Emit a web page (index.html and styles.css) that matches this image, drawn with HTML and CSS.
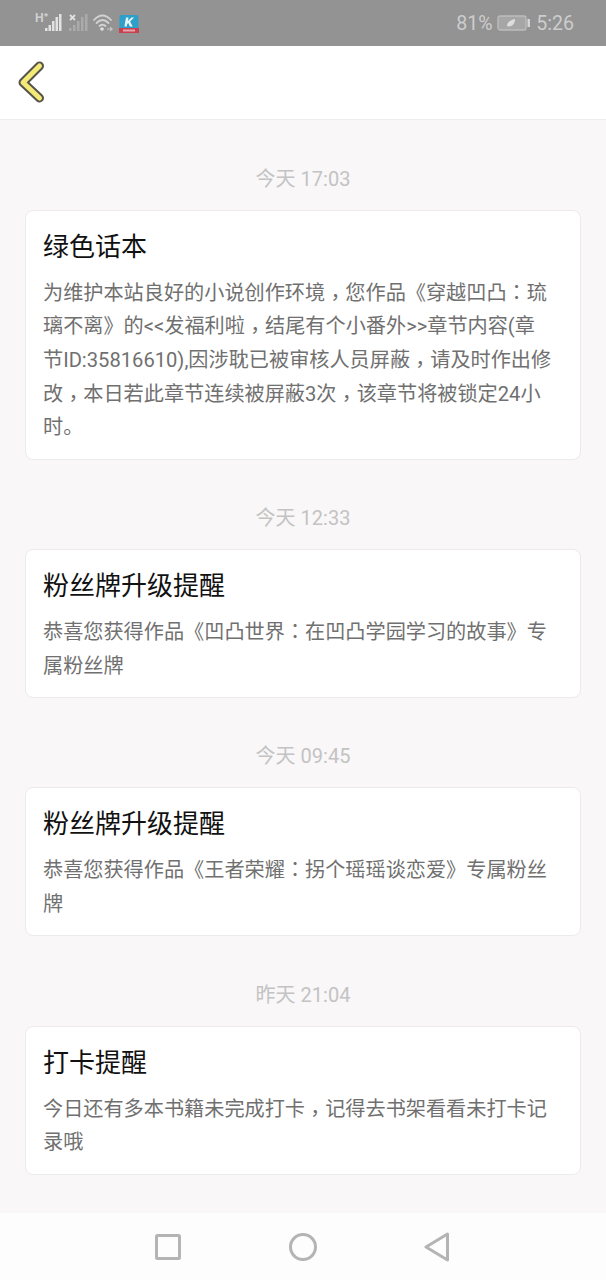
FILE: index.html
```html
<!DOCTYPE html>
<html lang="zh-CN">
<head>
<meta charset="utf-8">
<title>消息</title>
<link rel="stylesheet" href="styles.css">
</head>
<body>
<div class="screen">
  <div class="status">
    <div class="status-left">
      <svg class="sig" width="112" height="26" viewBox="0 0 112 26">
        <text x="1" y="13" class="net">H⁺</text>
        <g fill="#e2e2e2">
          <rect x="11" y="19" width="2.500" height="3"/><rect x="14.500" y="16" width="2.500" height="6"/><rect x="18" y="12" width="2.500" height="10"/><rect x="21.500" y="8" width="2.500" height="14"/><rect x="25" y="5" width="2.500" height="17"/>
        </g>
        <path d="M36 6l5 5M41 6l-5 5" stroke="#e0e0e0" stroke-width="1.800" fill="none"/>
        <g fill="#ababab">
          <rect x="35" y="19" width="2.500" height="3"/><rect x="39" y="16" width="2.500" height="6"/><rect x="43" y="12" width="2.500" height="10"/><rect x="47" y="8" width="2.500" height="14"/><rect x="51" y="5" width="2.500" height="17"/>
        </g>
        <g fill="none" stroke="#d2d2d2" stroke-width="1.800" stroke-linecap="round">
          <path d="M60 11q8.500-9 17 0"/><path d="M62.500 14q6-6 12 0"/><path d="M65.500 17q3-2.500 6 0"/>
        </g>
        <circle cx="68" cy="20" r="1.800" fill="#e0e0e0"/>
        <path d="M73 20h5l-1.800-1.800m1.800 1.800l-1.800 1.800" stroke="#c8c8c8" stroke-width="1.100" fill="none"/>
      </svg>
      <svg class="app" width="20" height="20" viewBox="0 0 20 20">
        <rect x="0.500" y="0" width="19" height="15" rx="2" fill="#2d9fc9"/>
        <path d="M7 2.500h2.500l-.6 3.500 3.600-3.500h2.600l-4 4 2.600 5h-2.800l-1.700-3.500-1 1-.5 2.500H5.400z" fill="#e6f5fa"/>
        <rect x="0" y="13" width="20" height="5" fill="#c9404f"/>
        <rect x="4" y="14.500" width="12" height="2" fill="#e6a5ac"/>
      </svg>
    </div>
    <div class="status-right">
      <span>81%</span>
      <svg class="batt" width="33" height="16" viewBox="0 0 33 16">
        <rect x="1" y="1" width="28" height="14" rx="2" fill="#a6a6a6" stroke="#bdbdbd" stroke-width="1.300"/>
        <path d="M10 11c0-4 4-6 8-7 0 4-2 7-6 7.500z" fill="#dedede"/>
        <rect x="30.500" y="4" width="2.400" height="8" fill="#d8d8d8"/>
      </svg>
      <span>5:26</span>
    </div>
  </div>

  <header class="nav">
    <svg class="back" width="30" height="44" viewBox="0 0 30 44">
      <path class="back-o" d="M23.500 5L7 21.500 23.500 37"/>
      <path class="back-i" d="M23.500 5L7 21.500 23.500 37"/>
    </svg>
  </header>

  <main class="list">
    <section class="item">
      <div class="time">今天 17:03</div>
      <article class="card">
        <h2 class="title">绿色话本</h2>
        <div class="body">
          <p class="ln">为维护本站良好的小说创作环境<span class="pn cm" lang="zh-Hant">，</span>您作品《穿越凹凸<span class="pn" lang="zh-Hant">：</span>琉</p>
          <p class="ln">璃不离》的&lt;&lt;发福利啦<span class="pn cm" lang="zh-Hant">，</span>结尾有个小番外&gt;&gt;章节内容(章</p>
          <p class="ln">节ID:35816610),因涉耽已被审核人员屏蔽<span class="pn cm" lang="zh-Hant">，</span>请及时作出修</p>
          <p class="ln">改<span class="pn cm" lang="zh-Hant">，</span>本日若此章节连续被屏蔽3次<span class="pn cm" lang="zh-Hant">，</span>该章节将被锁定24小</p>
          <p class="ln">时。</p>
        </div>
      </article>
    </section>
    <section class="item">
      <div class="time">今天 12:33</div>
      <article class="card">
        <h2 class="title">粉丝牌升级提醒</h2>
        <div class="body">
          <p class="ln">恭喜您获得作品《凹凸世界<span class="pn" lang="zh-Hant">：</span>在凹凸学园学习的故事》专</p>
          <p class="ln">属粉丝牌</p>
        </div>
      </article>
    </section>
    <section class="item">
      <div class="time">今天 09:45</div>
      <article class="card">
        <h2 class="title">粉丝牌升级提醒</h2>
        <div class="body">
          <p class="ln">恭喜您获得作品《王者荣耀<span class="pn" lang="zh-Hant">：</span>拐个瑶瑶谈恋爱》专属粉丝</p>
          <p class="ln">牌</p>
        </div>
      </article>
    </section>
    <section class="item">
      <div class="time">昨天 21:04</div>
      <article class="card">
        <h2 class="title">打卡提醒</h2>
        <div class="body">
          <p class="ln">今日还有多本书籍未完成打卡<span class="pn cm" lang="zh-Hant">，</span>记得去书架看看未打卡记</p>
          <p class="ln">录哦</p>
        </div>
      </article>
    </section>
  </main>

  <footer class="softkeys">
    <svg width="26" height="26" viewBox="0 0 26 26"><rect x="1.500" y="1.500" width="23" height="23" rx="1" class="key"/></svg>
    <svg width="30" height="30" viewBox="0 0 30 30"><circle cx="15" cy="15" r="12.500" class="key"/></svg>
    <svg width="26" height="30" viewBox="0 0 26 30"><path d="M23.500 2L2 15l21.500 13z" class="key"/></svg>
  </footer>
</div>
</body>
</html>
```
FILE: styles.css
```css
* { box-sizing: border-box; }
html, body { margin: 0; padding: 0; }
body {
  font-family: Roboto, "Noto Sans CJK SC", sans-serif;
  background: #f9f7f8;
}
.screen {
  width: 606px;
  height: 1280px;
  display: flex;
  flex-direction: column;
  overflow: hidden;
}
.status {
  height: 46px;
  flex: none;
  background: #939393;
  display: flex;
  align-items: center;
  justify-content: space-between;
  padding: 0 32px 0 34px;
  color: #cdcdcd;
}
.status-left { display: flex; align-items: center; margin-top: -2px; }
.sig { margin-right: -27px; }
.net { font: 700 12px "Liberation Sans", sans-serif; fill: #d0d0d0; }
.app { margin-top: 6px; }
.status-right {
  display: flex;
  align-items: center;
  gap: 6.500px;
  font: 19.600px Roboto, sans-serif;
}
.batt { margin-left: -2.500px; }
.nav {
  height: 74px;
  flex: none;
  background: #fff;
  border-bottom: 1px solid #eeeced;
  display: flex;
  align-items: center;
  padding-left: 16px;
}
.back { display: block; margin-top: 1px; }
.back-o { fill: none; stroke: #55534a; stroke-width: 9; stroke-linecap: round; stroke-linejoin: round; }
.back-i { fill: none; stroke: #f3ea78; stroke-width: 5; stroke-linecap: round; stroke-linejoin: round; }
.list {
  flex: 1;
  padding: 0 25px;
  display: flex;
  flex-direction: column;
}
.item { padding-top: 42.400px; }
.item:first-child { padding-top: 42.800px; }
.time {
  height: 30px;
  line-height: 32px;
  text-align: center;
  font-size: 20px;
  color: #c3c3c3;
  margin-bottom: 17px;
}
.card {
  background: #fff;
  border: 1px solid #eceaeb;
  border-radius: 8px;
  padding: 16px 17px 13.800px;
}
.title {
  margin: 0 0 10px;
  font-size: 26px;
  font-weight: 400;
  line-height: 40px;
  color: #111;
}
.body {
  font-size: 20.160px;
  line-height: 33.600px;
  color: #707070;
}
.ln { margin: 0; white-space: nowrap; }
.pn { font-family: "Noto Sans CJK TC", sans-serif; line-height: 0; }
.cm { vertical-align: -5px; }
.softkeys {
  height: 67px;
  flex: none;
  background: #fdfdfd;
  display: flex;
  align-items: center;
  padding-left: 155px;
}
.softkeys svg:nth-child(1) { margin-right: 107px; }
.softkeys svg:nth-child(2) { margin-right: 106px; }
.key { fill: none; stroke: #b4b4b4; stroke-width: 3; stroke-linejoin: round; }
```
